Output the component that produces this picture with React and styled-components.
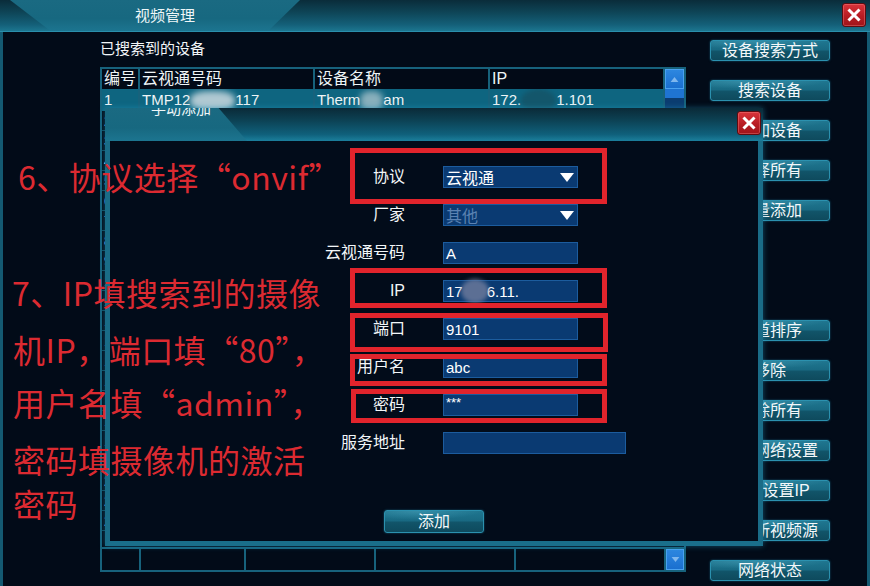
import React from "react";
import styled, { createGlobalStyle } from "styled-components";

const LAT = `"Liberation Sans", "Noto Sans CJK SC", sans-serif`;
const CJK = `"Noto Sans CJK SC", "Liberation Sans", sans-serif`;

const GlobalStyle = createGlobalStyle`
  html, body { margin: 0; padding: 0; background: #020b18; overflow: hidden; }
  body { font-family: ${LAT}; }
  * { box-sizing: border-box; }
`;

const Window = styled.div`
  position: relative;
  width: 870px;
  height: 586px;
  overflow: hidden;
  display: flex;
  flex-direction: column;
  background: #020b18;
  color: #fff;
  font-family: ${LAT};
`;

const TitleBar = styled.div`
  height: 32px;
  flex: none;
  display: flex;
  align-items: flex-start;
  justify-content: space-between;
  padding-right: 4px;
  background: linear-gradient(180deg, #0a2c3a 0%, #0e4557 40%, #146079 80%, #1c7690 100%);
  border-bottom: 1px solid #2a8fac;
`;

const TitleTab = styled.div`
  width: ${(p) => p.w}px;
  height: 100%;
  margin-left: ${(p) => p.ml || 0}px;
  padding-left: ${(p) => p.pl || 0}px;
  display: flex;
  justify-content: center;
  background: linear-gradient(180deg, #1a6a82 0%, #176880 60%, #1c7590 100%);
  clip-path: ${(p) => p.clip};
  overflow: hidden;
`;

const TitleText = styled.div`
  font-size: 15px;
  line-height: 16px;
  margin-top: ${(p) => p.mt}px;
  color: #eef6f8;
  white-space: nowrap;
`;

const CloseButton = styled.div`
  width: 24px;
  height: 24px;
  margin-top: 3px;
  border-radius: 3px;
  background: linear-gradient(180deg, #d9343b 0%, #b71c23 55%, #a0141a 100%);
  border: 1px solid #5e0b10;
  box-shadow: inset 0 0 0 1px rgba(255, 150, 150, 0.35);
  display: flex;
  align-items: center;
  justify-content: center;
  flex: none;
`;

const Body = styled.div`
  flex: 1;
  min-height: 0;
  display: flex;
  border-left: 3px solid #145a72;
  border-right: 3px solid #145a72;
  padding-left: 97px;
`;

const LeftPane = styled.div`
  width: 586px;
  flex: none;
  display: flex;
  flex-direction: column;
  padding-top: 7px;
`;

const SectionLabel = styled.div`
  height: 20px;
  line-height: 20px;
  font-size: 15px;
  margin-bottom: 8px;
  color: #f2f6f8;
`;

const Table = styled.div`
  height: 505px;
  border: 2px solid #17627c;
  display: flex;
  flex-direction: column;
  background: #020b18;
  overflow: hidden;
`;

const Row = styled.div`
  flex: none;
  display: grid;
  grid-template-columns: ${(p) => p.cols};
  height: ${(p) => p.h}px;
  background: ${(p) => p.bg || "transparent"};
  border-top: ${(p) => (p.top ? "2px solid #17627c" : "none")};
  border-bottom: ${(p) => (p.sep ? "1px solid #0f4a5e" : "none")};
`;

const Cell = styled.div`
  border-right: 2px solid #17627c;
  padding-left: 2px;
  font-size: ${(p) => (p.head ? 16 : 15)}px;
  line-height: ${(p) => p.h}px;
  white-space: nowrap;
  overflow: hidden;
  color: #eef4f6;
  &:last-child { border-right: none; }
`;

const Filler = styled.div`
  flex: 1;
  min-height: 0;
  overflow: hidden;
`;

const ScrollCell = styled.div`
  background: ${(p) => p.bg || "#0a2c55"};
  display: flex;
  align-items: center;
  justify-content: center;
`;

const ScrollBtn = styled.div`
  width: 100%;
  height: 100%;
  background: linear-gradient(180deg, #2d87e0 0%, #1a6fcf 100%);
  border: 1px solid #4aa2f0;
  display: flex;
  align-items: center;
  justify-content: center;
`;

const Blur = styled.span`
  display: inline-block;
  width: ${(p) => p.w}px;
  height: ${(p) => p.h || 18}px;
  margin: 0 ${(p) => p.mx || 0}px;
  vertical-align: middle;
  border-radius: ${(p) => p.r || "40%"};
  background: ${(p) => p.c};
  filter: blur(${(p) => p.b || 3}px);
`;

const ButtonColumn = styled.div`
  margin-left: 24px;
  width: 120px;
  flex: none;
  padding-top: 8px;
  display: flex;
  flex-direction: column;
  gap: 19px;
`;

const GlossButton = styled.div`
  width: ${(p) => p.w || 120}px;
  height: ${(p) => p.h || 21}px;
  flex: none;
  border-radius: 3px;
  border: 1px solid #2b91af;
  background:
    radial-gradient(ellipse 90% 60% at 35% 0%, rgba(80, 170, 195, 0.45) 0%, rgba(80, 170, 195, 0) 70%),
    linear-gradient(180deg, #1f7690 0%, #196a83 45%, #115469 55%, #0e4a5d 100%);
  box-shadow: 0 0 2px rgba(40, 150, 185, 0.6);
  font-size: 16px;
  line-height: ${(p) => (p.h || 21) - 2}px;
  text-align: center;
  color: #f4f8fa;
  white-space: nowrap;
  overflow: hidden;
`;

const Spacer = styled.div`
  height: ${(p) => p.h}px;
  flex: none;
`;

const Dialog = styled.div`
  position: absolute;
  left: 105px;
  top: 108px;
  width: 658px;
  height: 438px;
  display: flex;
  flex-direction: column;
  box-shadow: 0 0 6px rgba(40, 160, 200, 0.45);
`;

const DialogTitle = styled.div`
  height: 33px;
  flex: none;
  display: flex;
  justify-content: space-between;
  align-items: flex-start;
  padding-right: 2px;
  background: linear-gradient(180deg, #0a2a38 0%, #0c4052 35%, #0f607b 80%, #1b7f9c 100%);
  overflow: hidden;
`;

const DialogBody = styled.div`
  flex: 1;
  display: flex;
  flex-direction: column;
  align-items: stretch;
  border-left: 5px solid #1a6c87;
  border-right: 5px solid #1a6c87;
  border-bottom: 5px solid #1a6f8b;
  background: #020c1a;
`;

const Form = styled.div`
  display: grid;
  grid-template-columns: 295px 1fr;
  column-gap: 38px;
  grid-auto-rows: 38px;
  align-items: center;
  padding-top: 17px;
`;

const Label = styled.div`
  text-align: right;
  font-size: 16px;
  line-height: 20px;
  color: #f2f6f8;
  white-space: nowrap;
`;

const Field = styled.div`
  width: ${(p) => p.w || 135}px;
  height: 22px;
  background: #0a3a72;
  border: 1px solid #1c5c9e;
  display: flex;
  align-items: center;
  justify-content: space-between;
  padding: 0 3px 0 2px;
  font-size: ${(p) => (p.cjk ? 16 : 15)}px;
  color: ${(p) => (p.dim ? "#5b82b2" : "#ffffff")};
  white-space: nowrap;
`;

const FieldText = styled.span`
  display: flex;
  align-items: center;
`;

const Stars = styled.span`
  font-size: 13px;
  line-height: 10px;
  align-self: flex-start;
  margin-top: 3px;
`;

const AddButtonRow = styled.div`
  display: flex;
  justify-content: center;
  margin-top: 48px;
`;

const Overlay = styled.div`
  position: absolute;
  inset: 0;
  pointer-events: none;
`;

const RedBox = styled.div`
  position: absolute;
  left: ${(p) => p.x}px;
  top: ${(p) => p.y}px;
  width: ${(p) => p.w}px;
  height: ${(p) => p.h}px;
  border: 5px solid #e1242c;
`;

const Note = styled.div`
  position: absolute;
  left: ${(p) => p.x}px;
  top: ${(p) => p.y}px;
  font-family: ${CJK};
  font-size: 32px;
  line-height: 40px;
  letter-spacing: 0.5px;
  color: #dc2a31;
  white-space: nowrap;
`;

const XIcon = () => (
  <svg width="16" height="16" viewBox="0 0 16 16">
    <path d="M2.5 2.5 L13.5 13.5 M13.5 2.5 L2.5 13.5" stroke="#fff" strokeWidth="3" />
  </svg>
);

const Tri = ({ up, color = "#fff", w = 14, h = 9 }) => (
  <svg width={w} height={h} viewBox="0 0 14 9">
    <polygon points={up ? "0,9 14,9 7,0" : "0,0 14,0 7,9"} fill={color} />
  </svg>
);

const HEAD_COLS = "38px 175px 175px 175px 1fr";
const FOOT_COLS = "39px 105px 130px 140px 150px 1fr";

const sideButtons = [
  "设备搜索方式",
  "搜索设备",
  "添加设备",
  "选择所有",
  "批量添加",
  null,
  "通道排序",
  "移除",
  "删除所有",
  "修改网络设置",
  "批量设置IP",
  "添加新视频源",
  "网络状态",
];

const fields = [
  { label: "协议", value: "云视通", select: true },
  { label: "厂家", value: "其他", select: true, dim: true },
  { label: "云视通号码", value: "A" },
  { label: "IP", ip: true },
  { label: "端口", value: "9101" },
  { label: "用户名", value: "abc" },
  { label: "密码", stars: true },
  { label: "服务地址", value: "", w: 183 },
];

export default function App() {
  const fillerRows = Array.from({ length: 21 }, (_, i) => i + 2);
  return (
    <>
      <GlobalStyle />
      <Window>
        <TitleBar>
          <TitleTab w={290} ml={10} pl={20} clip="polygon(0 0, 100% 0, 89% 100%, 14% 100%)">
            <TitleText mt={8}>视频管理</TitleText>
          </TitleTab>
          <CloseButton>
            <XIcon />
          </CloseButton>
        </TitleBar>

        <Body>
          <LeftPane>
            <SectionLabel>已搜索到的设备</SectionLabel>
            <Table>
              <Row cols={HEAD_COLS} h={20} bg="#020a17">
                <Cell head h={20}>编号</Cell>
                <Cell head h={20}>云视通号码</Cell>
                <Cell head h={20}>设备名称</Cell>
                <Cell head h={20}>IP</Cell>
                <ScrollCell>
                  <ScrollBtn>
                    <Tri up color="#7fb7ee" w={9} h={5} />
                  </ScrollBtn>
                </ScrollCell>
              </Row>
              <Row cols={HEAD_COLS} h={22} bg="#0e6580">
                <Cell h={22}>1</Cell>
                <Cell h={22}>
                  TMP12
                  <Blur w={45} h={20} c="rgba(205,218,224,0.85)" b={3} />
                  117
                </Cell>
                <Cell h={22}>
                  Therm
                  <Blur w={23} h={20} c="rgba(190,208,214,0.7)" b={3} />
                  am
                </Cell>
                <Cell h={22}>
                  172.
                  <Blur w={35} h={24} r="50%" c="rgba(20,85,105,0.95)" b={2} />
                  1.101
                </Cell>
                <ScrollCell bg="linear-gradient(180deg, #1f74d2 0 9px, #0b3c70 9px)" />
              </Row>
              <Filler>
                {fillerRows.map((n) => (
                  <Row key={n} cols={HEAD_COLS} h={20} sep>
                    <Cell h={19}>{n}</Cell>
                    <Cell h={19} />
                    <Cell h={19} />
                    <Cell h={19} />
                    <ScrollCell bg="#0a2c55" />
                  </Row>
                ))}
              </Filler>
              <Row cols={FOOT_COLS} h={23} top>
                <Cell h={21} />
                <Cell h={21} />
                <Cell h={21} />
                <Cell h={21} />
                <Cell h={21} />
                <ScrollCell>
                  <ScrollBtn>
                    <Tri color="#7fb7ee" w={9} h={5} />
                  </ScrollBtn>
                </ScrollCell>
              </Row>
            </Table>
          </LeftPane>

          <ButtonColumn>
            {sideButtons.map((label, i) =>
              label ? (
                <GlossButton key={i}>{label}</GlossButton>
              ) : (
                <Spacer key={i} h={61} />
              )
            )}
          </ButtonColumn>
        </Body>

        <Dialog>
          <DialogTitle>
            <TitleTab w={142} clip="polygon(0 0, 80% 0, 100% 100%, 0 100%)" pl={10}>
              <TitleText mt={-7}>手动添加</TitleText>
            </TitleTab>
            <CloseButton>
              <XIcon />
            </CloseButton>
          </DialogTitle>
          <DialogBody>
            <Form>
              {fields.map((f) => (
                <React.Fragment key={f.label}>
                  <Label>{f.label}</Label>
                  <Field w={f.w} dim={f.dim} cjk={f.select}>
                    {f.ip ? (
                      <FieldText>
                        17
                        <Blur w={28} h={24} r="50%" mx={-2} c="rgba(120,130,160,0.75)" b={2} />
                        6.11.
                      </FieldText>
                    ) : f.stars ? (
                      <Stars>***</Stars>
                    ) : (
                      <FieldText>{f.value}</FieldText>
                    )}
                    {f.select && <Tri />}
                  </Field>
                </React.Fragment>
              ))}
            </Form>
            <AddButtonRow>
              <GlossButton w={100} h={23}>添加</GlossButton>
            </AddButtonRow>
          </DialogBody>
        </Dialog>

        <Overlay>
          <RedBox x={350} y={148} w={257} h={56} />
          <RedBox x={350} y={268} w={257} h={40} />
          <RedBox x={350} y={313} w={258} h={39} />
          <RedBox x={350} y={354} w={257} h={32} />
          <RedBox x={351} y={389} w={256} h={34} />

          <Note x={18} y={156}>6、协议选择“onvif”</Note>
          <Note x={12} y={272}>7、IP填搜索到的摄像</Note>
          <Note x={13} y={329}>机IP，端口填“80”，</Note>
          <Note x={13} y={382}>用户名填“admin”，</Note>
          <Note x={13} y={439}>密码填摄像机的激活</Note>
          <Note x={13} y={483}>密码</Note>
        </Overlay>
      </Window>
    </>
  );
}
